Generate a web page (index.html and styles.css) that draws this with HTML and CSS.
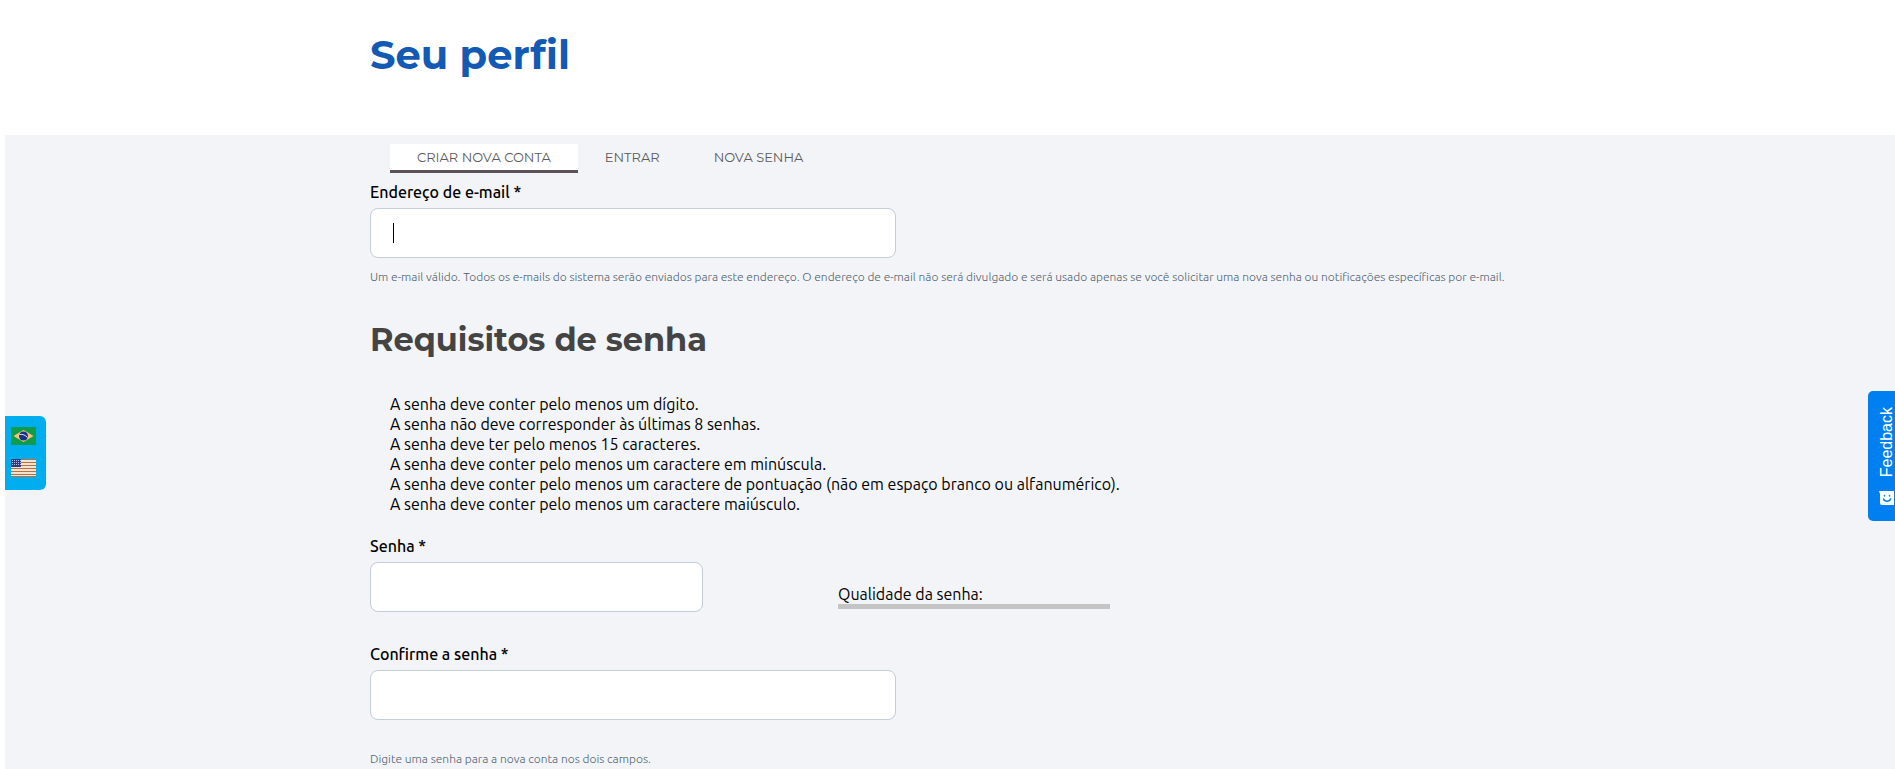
FILE: index.html
```
<!DOCTYPE html>
<html lang="pt-BR">
<head>
  <meta charset="UTF-8" />
  <meta name="viewport" content="width=device-width, initial-scale=1.0"/>
  <title>Seu perfil</title>
  <link rel="stylesheet" href="styles.css">
</head>
<body>
  <header class="page-header">
    <div class="container">
      <h1>Seu perfil</h1>
    </div>
  </header>

  <main class="page-main">
    <div class="container">
      <nav class="tabs">
        <a class="tab active" href="#register">Criar nova conta</a>
        <a class="tab" href="#login">Entrar</a>
        <a class="tab" href="#password">Nova senha</a>
      </nav>

      <form>
        <div class="field">
          <label for="email">Endereço de e-mail *</label>
          <div class="input-wrap">
            <input type="email" id="email" required>
            <span class="caret"></span>
          </div>
          <p class="description">Um e-mail válido. Todos os e-mails do sistema serão enviados para este endereço. O endereço de e-mail não será divulgado e será usado apenas se você solicitar uma nova senha ou notificações específicas por e-mail.</p>
        </div>

        <h2>Requisitos de senha</h2>
        <ul class="policy">
          <li>A senha deve conter pelo menos um dígito.</li>
          <li>A senha não deve corresponder às últimas 8 senhas.</li>
          <li>A senha deve ter pelo menos 15 caracteres.</li>
          <li>A senha deve conter pelo menos um caractere em minúscula.</li>
          <li>A senha deve conter pelo menos um caractere de pontuação (não em espaço branco ou alfanumérico).</li>
          <li>A senha deve conter pelo menos um caractere maiúsculo.</li>
        </ul>

        <div class="password-row">
          <div class="field password-field">
            <label for="pass1">Senha *</label>
            <input type="password" id="pass1" required>
          </div>
          <div class="strength">
            <div class="strength-title">Qualidade da senha:</div>
            <div class="strength-bar"></div>
          </div>
        </div>

        <div class="field confirm-field">
          <label for="pass2">Confirme a senha *</label>
          <input type="password" id="pass2" required>
          <p class="description">Digite uma senha para a nova conta nos dois campos.</p>
        </div>
      </form>
    </div>
  </main>

  <div class="languages">
    <a href="#pt-br" aria-label="Português">
      <svg width="25" height="18" viewBox="0 0 25 18">
        <rect width="25" height="18" rx="1" fill="#0f9d49"/>
        <path d="M12.500 3L22.500 9l-10 6L2.500 9z" fill="#f8c27a"/>
        <circle cx="12.500" cy="9" r="4.500" fill="#17308c"/>
        <path d="M8.500 7.500c3-.5 6 .5 8 3" fill="none" stroke="#dfe6f5" stroke-width="1"/>
      </svg>
    </a>
    <a href="#en" aria-label="English">
      <svg width="25" height="18" viewBox="0 0 25 18">
        <rect width="25" height="18" rx="1" fill="#f5e3d2"/>
        <path d="M0 .5h25M0 3.500h25M0 6.500h25M0 9.500h25M0 12.500h25M0 15.500h25M0 17.500h25" stroke="#b5713f" stroke-width="1"/>
        <rect width="10" height="8" fill="#2d3a86"/>
        <path d="M1 1.500h9M1 3.500h9M1 5.500h9" stroke="#b9bedb" stroke-width="1" stroke-dasharray="1 1"/>
      </svg>
    </a>
  </div>

  <button class="feedback" type="button">
    <svg width="15" height="14" viewBox="0 0 15 14">
      <path d="M0 0h15v14H3a2 2 0 0 1-2-2V3z" fill="#fff"/>
      <path d="M5.500 4.500v.5M10.500 4.500v.5M4.500 8c1 3 6 3 7 0" fill="none" stroke="#0080f0" stroke-width="1.500" stroke-linecap="round"/>
    </svg>
    <span>Feedback</span>
  </button>
</body>
</html>
```
FILE: styles.css
```
* {
  box-sizing: border-box;
}

body {
  margin: 0;
  padding-left: 5px;
  min-height: 100vh;
  display: flex;
  flex-direction: column;
  font-family: Ubuntu, "Noto Sans", sans-serif;
  font-size: 16px;
  line-height: 20px;
  color: #000;
  background-color: #fff;
}

.container {
  max-width: 1160px;
  margin: 0 auto;
}

.page-header {
  height: 135px;
  padding-top: 30px;
}

h1, h2 {
  font-family: Montserrat, "Open Sans", sans-serif;
  font-weight: bold;
  margin: 0;
}

h1 {
  font-size: 40px;
  line-height: 50px;
  color: #125ab4;
}

h2 {
  font-size: 32px;
  line-height: 40px;
  color: #444;
  margin-top: 33px;
}

.page-main {
  flex: 1;
  padding-top: 9px;
  background-color: #f2f4f8;
}

/* tabs */
.tabs {
  display: flex;
  padding-left: 20px;
  margin-bottom: 9px;
}

.tab {
  padding: 3px 27px;
  border-bottom: 3px solid transparent;
  font-family: Montserrat, "Open Sans", sans-serif;
  font-size: 13px;
  text-transform: uppercase;
  text-decoration: none;
  color: #5b5b5b;
}

.tab.active {
  background-color: #fff;
  border-bottom-color: #5b5358;
}

/* form */
label {
  display: block;
  font-weight: 500;
  margin-bottom: 6px;
}

.input-wrap {
  position: relative;
  width: 526px;
}

input {
  display: block;
  width: 526px;
  max-width: 100%;
  height: 50px;
  padding: 0 20px;
  border: 1px solid #c3cdd8;
  border-radius: 8px;
  background-color: #fff;
  font: inherit;
}

input:focus {
  outline: none;
}

.caret {
  position: absolute;
  left: 23px;
  top: 15px;
  width: 1px;
  height: 20px;
  background-color: #000;
}

.description {
  margin: 9px 0 0;
  font-size: 12px;
  font-weight: 300;
  color: #4f5f6e;
}

.policy {
  list-style: none;
  margin: 34px 0 22px;
  padding-left: 20px;
}

.password-row {
  display: flex;
  align-items: flex-end;
  gap: 135px;
}

.password-field input {
  width: 333px;
}

.strength {
  width: 272px;
  margin-bottom: 3px;
}

.strength-bar {
  height: 5px;
  background-color: #c4c4c4;
}

.confirm-field {
  margin-top: 32px;
}

.confirm-field .description {
  margin-top: 29px;
}

/* side widgets */
.languages {
  position: fixed;
  left: 5px;
  top: 416px;
  display: flex;
  flex-direction: column;
  gap: 14px;
  padding: 11px 10px 13px 6px;
  border-radius: 0 6px 6px 0;
  background-color: #00aeef;
}

.languages svg {
  display: block;
}

.feedback {
  position: fixed;
  right: 0;
  top: 391px;
  width: 27px;
  height: 130px;
  padding: 0 0 0 11px;
  display: flex;
  flex-direction: column-reverse;
  align-items: flex-start;
  justify-content: center;
  gap: 13px;
  border: 0;
  border-radius: 5px 0 0 5px;
  background-color: #0080f0;
  color: #fff;
  font: 16px/16px "Liberation Sans", sans-serif;
}

.feedback span {
  writing-mode: vertical-rl;
  transform: rotate(180deg);
}
```
